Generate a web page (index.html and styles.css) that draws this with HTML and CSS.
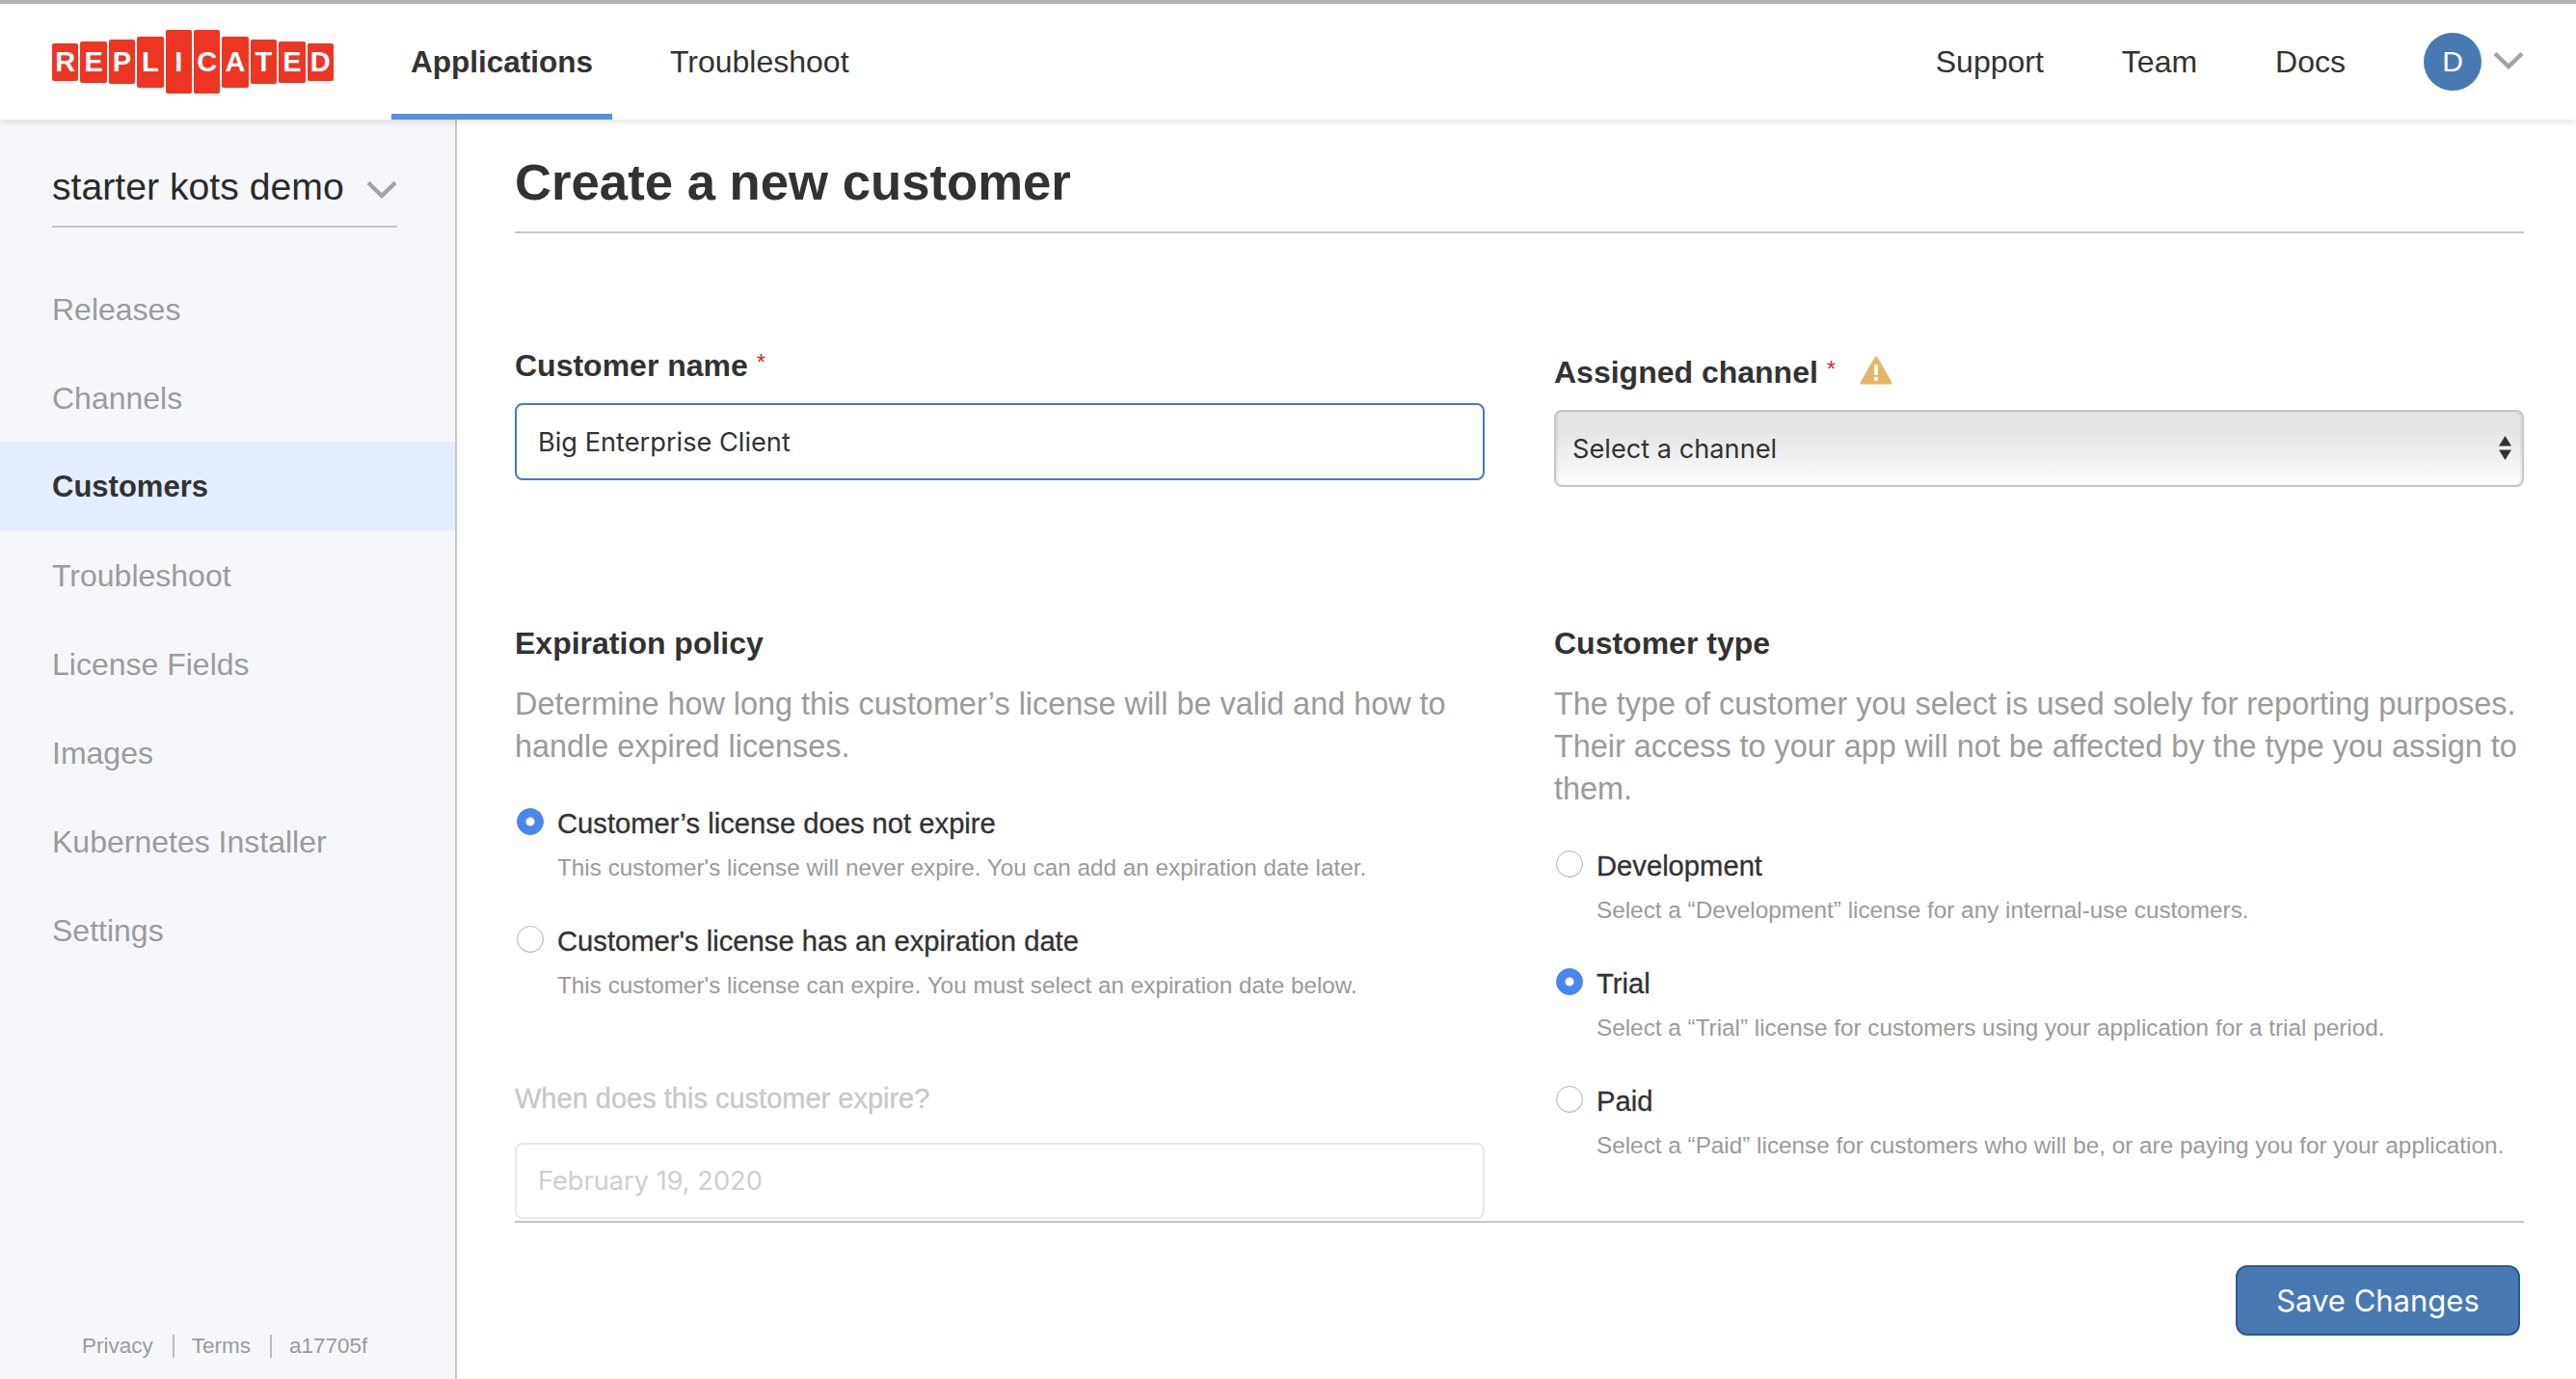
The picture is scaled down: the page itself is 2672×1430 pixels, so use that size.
FILE: index.html
```html
<!DOCTYPE html>
<html lang="en">
<head>
<meta charset="UTF-8">
<meta name="viewport" content="width=device-width, initial-scale=1.0">
<title>Create a new customer</title>
<link rel="stylesheet" href="styles.css">
</head>
<body>
  <header class="topbar">
    <div class="logo">
      <span class="logo-tile tile-1">R</span>
      <span class="logo-tile tile-2">E</span>
      <span class="logo-tile tile-3">P</span>
      <span class="logo-tile tile-4">L</span>
      <span class="logo-tile tile-5">I</span>
      <span class="logo-tile tile-5">C</span>
      <span class="logo-tile tile-4">A</span>
      <span class="logo-tile tile-3">T</span>
      <span class="logo-tile tile-2">E</span>
      <span class="logo-tile tile-1">D</span>
    </div>
    <nav class="tabs">
      <a class="tab tab-active">Applications</a>
      <a class="tab">Troubleshoot</a>
    </nav>
    <nav class="toplinks">
      <a class="toplink">Support</a>
      <a class="toplink">Team</a>
      <a class="toplink">Docs</a>
    </nav>
    <div class="account">
      <span class="avatar">D</span>
      <svg class="chevron" width="32" height="19" viewBox="0 0 32 19"><path d="M2 2.5 16 16 30 2.5" fill="none" stroke="#a3a3a3" stroke-width="4.5"/></svg>
    </div>
  </header>

  <div class="layout">
    <aside class="sidebar">
      <div class="app-picker">
        <span class="app-name">starter kots demo</span>
        <svg class="chevron" width="32" height="19" viewBox="0 0 32 19"><path d="M2 2.5 16 16 30 2.5" fill="none" stroke="#a3a3a3" stroke-width="4.5"/></svg>
      </div>
      <nav class="sidenav">
        <a class="sidenav-item">Releases</a>
        <a class="sidenav-item">Channels</a>
        <a class="sidenav-item sidenav-active">Customers</a>
        <a class="sidenav-item">Troubleshoot</a>
        <a class="sidenav-item">License Fields</a>
        <a class="sidenav-item">Images</a>
        <a class="sidenav-item">Kubernetes Installer</a>
        <a class="sidenav-item">Settings</a>
      </nav>
      <div class="sidefoot">
        <span class="sidefoot-item">Privacy</span>
        <span class="sidefoot-item">Terms</span>
        <span class="sidefoot-item">a17705f</span>
      </div>
    </aside>

    <main class="content">
      <h1 class="page-title">Create a new customer</h1>

      <form class="customer-form">
        <div class="form-columns top-fields">
          <div class="name-field">
            <label class="field-label" for="customerName">Customer name <span class="required">*</span></label>
            <input class="text-input input-focus" type="text" id="customerName" value="Big Enterprise Client">
          </div>
          <div class="channel-field">
            <label class="field-label" for="channel">Assigned channel <span class="required">*</span>
              <svg class="warn-icon" width="34" height="30" viewBox="0 0 34 30"><path d="M17 2 32 28H2Z" fill="#e4b66a" stroke="#e4b66a" stroke-width="3" stroke-linejoin="round"/><rect x="15.2" y="9" width="3.6" height="11" fill="#fff"/><rect x="15.2" y="22" width="3.6" height="3.6" fill="#fff"/></svg>
            </label>
            <div class="select-wrap">
              <select class="select-input" id="channel">
                <option>Select a channel</option>
              </select>
              <svg class="select-arrows" width="13" height="25" viewBox="0 0 13 25"><path d="M6.5 0 13 10.5H0ZM6.5 25 0 14.5H13Z" fill="#333"/></svg>
            </div>
          </div>
        </div>

        <div class="form-columns">
          <section>
            <h2 class="section-title">Expiration policy</h2>
            <p class="section-desc">Determine how long this customer’s license will be valid and how to handle expired licenses.</p>
            <label class="radio-row">
              <input class="radio" type="radio" name="expires" checked>
              <span class="radio-text">
                <span class="radio-label">Customer’s license does not expire</span>
                <span class="radio-help">This customer's license will never expire. You can add an expiration date later.</span>
              </span>
            </label>
            <label class="radio-row">
              <input class="radio" type="radio" name="expires">
              <span class="radio-text">
                <span class="radio-label">Customer's license has an expiration date</span>
                <span class="radio-help">This customer's license can expire. You must select an expiration date below.</span>
              </span>
            </label>
            <label class="date-label" for="expireDate">When does this customer expire?</label>
            <input class="text-input input-disabled" type="text" id="expireDate" placeholder="February 19, 2020" disabled>
          </section>
          <section>
            <h2 class="section-title">Customer type</h2>
            <p class="section-desc">The type of customer you select is used solely for reporting purposes. Their access to your app will not be affected by the type you assign to them.</p>
            <label class="radio-row">
              <input class="radio" type="radio" name="type">
              <span class="radio-text">
                <span class="radio-label">Development</span>
                <span class="radio-help">Select a “Development” license for any internal-use customers.</span>
              </span>
            </label>
            <label class="radio-row">
              <input class="radio" type="radio" name="type" checked>
              <span class="radio-text">
                <span class="radio-label">Trial</span>
                <span class="radio-help">Select a “Trial” license for customers using your application for a trial period.</span>
              </span>
            </label>
            <label class="radio-row">
              <input class="radio" type="radio" name="type">
              <span class="radio-text">
                <span class="radio-label">Paid</span>
                <span class="radio-help">Select a “Paid” license for customers who will be, or are paying you for your application.</span>
              </span>
            </label>
          </section>
        </div>
      </form>

      <footer class="form-footer">
        <button class="save-button" type="button">Save Changes</button>
      </footer>
    </main>
  </div>
</body>
</html>
```

FILE: styles.css
```css
* {
  box-sizing: border-box;
}

html,
body {
  height: 100%;
}

body {
  margin: 0;
  display: flex;
  flex-direction: column;
  overflow: hidden;
  background-color: #fff;
  border-top: 4px solid #b4b4b4;
  color: #323232;
  font-family: "Liberation Sans", Arial, sans-serif;
}

/* Top bar */
.topbar {
  position: relative;
  z-index: 1;
  display: flex;
  align-items: center;
  flex: 0 0 120px;
  padding: 0 54px;
  background-color: #fff;
  box-shadow: 0 2px 8px rgba(0, 0, 0, 0.12);
}

.logo {
  display: flex;
  align-items: center;
  gap: 2px;
}

.logo-tile {
  display: flex;
  align-items: center;
  justify-content: center;
  width: 27.4px;
  background-color: #ee3524;
  border-radius: 2px;
  color: #fff;
  font-size: 29px;
  font-weight: bold;
}

.tile-1 { height: 39px; }
.tile-2 { height: 43px; }
.tile-3 { height: 46px; }
.tile-4 { height: 53px; }
.tile-5 { height: 66px; }

.tabs {
  display: flex;
  align-self: stretch;
  gap: 40px;
  margin-left: 60px;
}

.tab {
  display: flex;
  align-items: center;
  padding: 6px 20px 0;
  border-bottom: 6px solid transparent;
  font-size: 32px;
}

.tab-active {
  border-bottom-color: #5a8fdc;
  font-size: 31.5px;
  font-weight: bold;
}

.toplinks {
  display: flex;
  gap: 81px;
  margin-left: auto;
}

.toplink {
  font-size: 32px;
}

.account {
  display: flex;
  align-items: center;
  gap: 12px;
  margin-left: 81px;
}

.avatar {
  display: flex;
  align-items: center;
  justify-content: center;
  width: 60px;
  height: 60px;
  background-color: #477ab3;
  border-radius: 50%;
  color: #fff;
  font-size: 30px;
}

.account .chevron {
  margin-top: -3px;
}

/* Sidebar */
.layout {
  display: flex;
  flex: 1;
  min-height: 0;
}

.sidebar {
  display: flex;
  flex-direction: column;
  flex: 0 0 474px;
  background-color: #f5f7fb;
  border-right: 2px solid #c4c8cc;
}

.app-picker {
  display: flex;
  align-items: center;
  justify-content: space-between;
  height: 76px;
  margin: 36px 60px 0 54px;
  padding-bottom: 6px;
  border-bottom: 2px solid #c4c8cc;
}

.app-picker .chevron {
  margin-top: 4px;
}

.app-name {
  font-size: 39.2px;
  color: #2a2a2a;
}

.sidenav {
  margin-top: 38px;
}

.sidenav-item {
  display: flex;
  align-items: center;
  height: 92px;
  padding: 2px 0 0 54px;
  color: #9b9b9b;
  font-size: 32px;
}

.sidenav-active {
  background-color: #e4eefc;
  color: #323232;
  font-size: 31px;
  font-weight: bold;
}

.sidefoot {
  display: flex;
  margin-top: auto;
  margin-bottom: 22px;
  padding-left: 85px;
}

.sidefoot-item {
  display: flex;
  align-items: center;
  height: 24px;
  color: #9b9b9b;
  font-size: 22.5px;
}

.sidefoot-item + .sidefoot-item {
  margin-left: 20px;
  padding-left: 18px;
  border-left: 2px solid #b9bcc0;
}

/* Main content */
.content {
  display: flex;
  flex-direction: column;
  flex: 1;
  min-width: 0;
  padding: 0 54px 0 60px;
}

.page-title {
  flex: none;
  height: 118px;
  margin: 0;
  padding-top: 36px;
  border-bottom: 2px solid #c4c8cc;
  font-size: 52.7px;
  line-height: 58px;
}

.customer-form {
  flex: 1;
  min-height: 0;
  overflow: hidden;
}

.form-columns {
  display: grid;
  grid-template-columns: 1006px 1006px;
  column-gap: 72px;
}

.top-fields {
  height: 403px;
  padding-top: 113px;
}

.channel-field {
  padding-top: 7px;
}

.field-label {
  display: block;
  height: 63px;
  font-size: 32px;
  font-weight: bold;
  line-height: 42px;
}

.required {
  color: #c4323a;
  font-size: 24px;
  font-weight: normal;
  vertical-align: 6px;
}

.warn-icon {
  margin-left: 16px;
  vertical-align: -2px;
}

.text-input {
  display: block;
  width: 100%;
  height: 80px;
  padding: 0 22px;
  background-color: #fff;
  border-radius: 8px;
  font-family: Inter, sans-serif;
  font-size: 27.2px;
  color: #323232;
  outline: none;
}

.input-focus {
  border: 2px solid #4a7ab5;
}

.input-disabled {
  height: 79px;
  border: 2px solid #e8e8e8;
}

.input-disabled::placeholder {
  color: #cfcfcf;
}

.select-wrap {
  position: relative;
}

.select-input {
  display: block;
  width: 100%;
  height: 80px;
  padding: 0 17px;
  appearance: none;
  background: linear-gradient(#e6e6e6 30%, #fdfdfd 100%);
  border: 2px solid #c4c8cc;
  border-radius: 8px;
  box-shadow: inset 2px 0 2px rgba(0, 0, 0, 0.06), inset -2px 0 2px rgba(0, 0, 0, 0.06);
  font-family: Inter, sans-serif;
  font-size: 27.2px;
  color: #323232;
}

.select-arrows {
  position: absolute;
  top: 27px;
  right: 13px;
}

.section-title {
  margin: 0;
  font-size: 32px;
  line-height: 44px;
}

.section-desc {
  margin: 19px 0 0;
  color: #9b9b9b;
  font-size: 32.4px;
  line-height: 44px;
}

.radio-row {
  display: flex;
  gap: 14px;
  margin-top: 40px;
}

.radio {
  flex: none;
  width: 28px;
  height: 28px;
  margin: 2px 0 0 2px;
  appearance: none;
  background-color: #fff;
  border: 1px solid #b5b5b5;
  border-radius: 50%;
  box-shadow: inset 0 -1px 1px rgba(0, 0, 0, 0.1);
}

.radio:checked {
  background-color: #4a86f0;
  border-color: #4a86f0;
  box-shadow: none;
  background-image: radial-gradient(circle, #fff 0 4px, transparent 5px);
}

.radio-text {
  display: flex;
  flex-direction: column;
  gap: 10px;
}

.radio-label {
  font-size: 29.2px;
  line-height: 36px;
  -webkit-text-stroke: 0.3px #323232;
}

.radio-help {
  color: #9b9b9b;
  font-size: 24.3px;
  line-height: 36px;
}

.date-label {
  display: block;
  margin-top: 77px;
  height: 68px;
  color: #c8c8c8;
  font-size: 29px;
  line-height: 44px;
  -webkit-text-stroke: 0.3px #c8c8c8;
}

.form-footer {
  display: flex;
  justify-content: flex-end;
  flex: none;
  height: 164px;
  padding: 44px 4px 0 0;
  border-top: 2px solid #c4c4c4;
}

.save-button {
  width: 295px;
  height: 73px;
  background-color: #477ab3;
  border: 2px solid #2f5a8a;
  border-radius: 12px;
  color: #fff;
  font-family: Inter, sans-serif;
  font-size: 31px;
}
```
